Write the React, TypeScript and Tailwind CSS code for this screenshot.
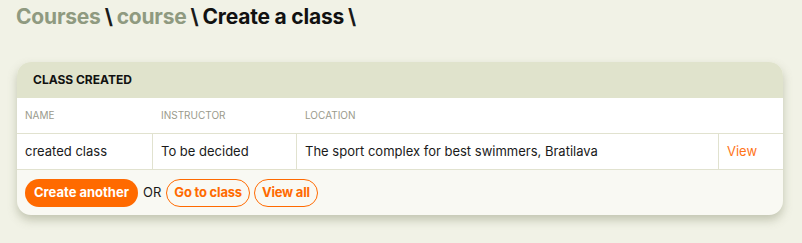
import React from "react";

export default function App() {
  const font = { fontFamily: "Inter, 'Noto Sans', sans-serif" };
  return (
    <div className="w-[802px] h-[243px] bg-[#f1f2e6] overflow-hidden" style={font}>
      <div className="px-4 pt-[3px] h-[28px] text-[21px] leading-[28px] font-bold tracking-[-0.2px] flex gap-[4px]">
        <span className="text-[#8f9a80]">Courses</span>
        <span className="text-[#1a1a1a]">\</span>
        <span className="text-[#8f9a80]">course</span>
        <span className="text-[#1a1a1a]">\</span>
        <span className="text-[#111]">Create a class</span>
        <span className="text-[#1a1a1a]">\</span>
      </div>
      <div className="ml-[17px] mt-[34px] w-[766px] rounded-[14px] overflow-hidden bg-[#f9f9f3] shadow-[0_5px_10px_rgba(110,115,80,0.35)]">
        <div className="h-[36px] bg-[#e0e3cc] flex items-center pl-4 text-[12px] font-bold text-[#111]">
          CLASS CREATED
        </div>
        <div className="bg-white">
          <div className="flex h-[36px] items-center text-[10px] text-[#9a9a8c] border-b border-[#e1e2cf]">
            <div className="w-[136px] pl-2">NAME</div>
            <div className="w-[144px] pl-2">INSTRUCTOR</div>
            <div className="w-[422px] pl-2">LOCATION</div>
            <div className="flex-1"></div>
          </div>
          <div className="flex h-[36px] text-[13px] text-[#1a1a1a] border-b border-[#e1e2cf]">
            <div className="w-[136px] pl-2 flex items-center border-r border-[#e1e2cf]">created class</div>
            <div className="w-[144px] pl-2 flex items-center border-r border-[#e1e2cf]">To be decided</div>
            <div className="w-[422px] pl-2 flex items-center border-r border-[#e1e2cf]">The sport complex for best swimmers, Bratilava</div>
            <div className="flex-1 pl-2 flex items-center text-[#ff7417]">View</div>
          </div>
        </div>
        <div className="flex items-center gap-[4px] px-2 pt-[9px] pb-[8px] text-[13px]">
          <button className="h-[28px] px-[9px] rounded-full bg-[#ff6a00] text-white font-bold">Create another</button>
          <span className="text-[#1a1a1a] mx-[1px]">OR</span>
          <button className="h-[28px] px-[7px] rounded-full border border-[#ff6a00] text-[#ff6a00] font-bold tracking-[-0.2px]">Go to class</button>
          <button className="h-[28px] px-[7px] rounded-full border border-[#ff6a00] text-[#ff6a00] font-bold tracking-[-0.2px]">View all</button>
        </div>
      </div>
    </div>
  );
}
